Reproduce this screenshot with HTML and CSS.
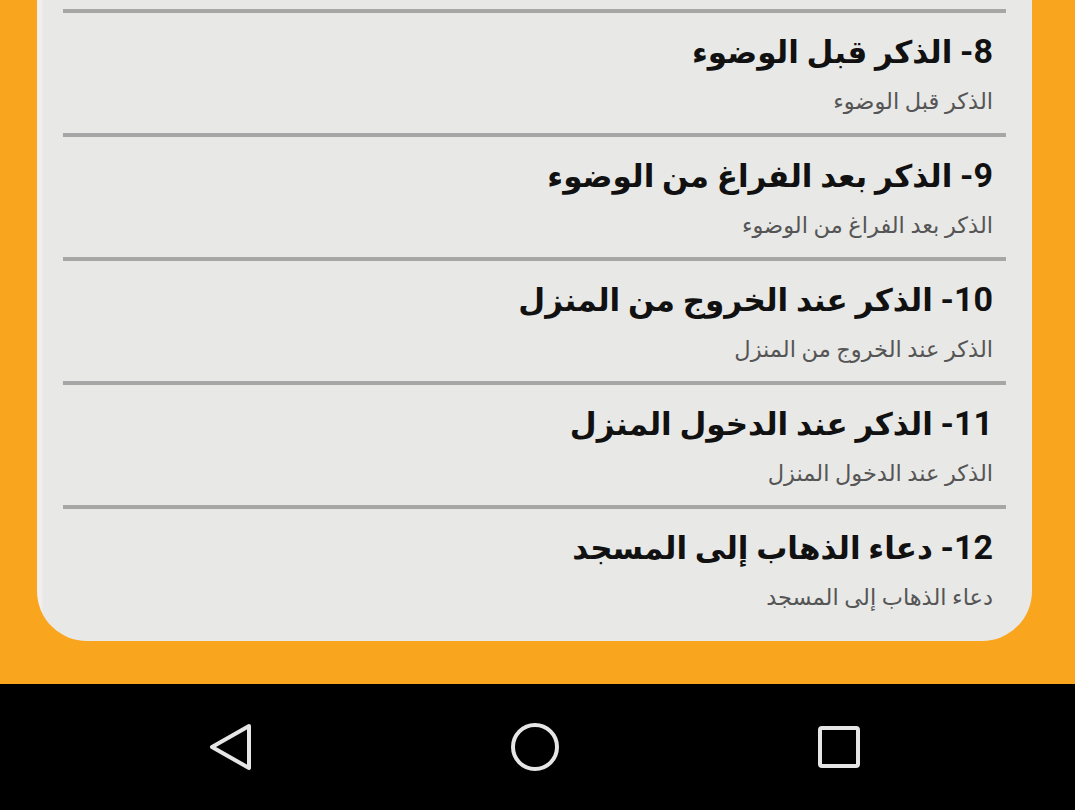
FILE: index.html
```html
<!DOCTYPE html>
<html lang="ar">
<head>
<meta charset="utf-8">
<title>أذكار</title>
<link rel="stylesheet" href="styles.css">
</head>
<body>
<div class="screen">
  <main class="content">
    <section class="card" dir="rtl">
      <div class="item">
        <div class="title"><span class="num">8-</span> الذكر قبل الوضوء</div>
        <div class="subtitle">الذكر قبل الوضوء</div>
      </div>
      <div class="item">
        <div class="title"><span class="num">9-</span> الذكر بعد الفراغ من الوضوء</div>
        <div class="subtitle">الذكر بعد الفراغ من الوضوء</div>
      </div>
      <div class="item">
        <div class="title"><span class="num">10-</span> الذكر عند الخروج من المنزل</div>
        <div class="subtitle">الذكر عند الخروج من المنزل</div>
      </div>
      <div class="item">
        <div class="title"><span class="num">11-</span> الذكر عند الدخول المنزل</div>
        <div class="subtitle">الذكر عند الدخول المنزل</div>
      </div>
      <div class="item">
        <div class="title"><span class="num">12-</span> دعاء الذهاب إلى المسجد</div>
        <div class="subtitle">دعاء الذهاب إلى المسجد</div>
      </div>
    </section>
  </main>
  <nav class="navbar">
    <div class="nav-btn">
      <svg width="48" height="48" viewBox="0 0 48 48"><path d="M42 3 L5 24 L42 45 Z" fill="none" stroke="#e6e6e6" stroke-width="4" stroke-linejoin="round"/></svg>
    </div>
    <div class="nav-btn">
      <svg width="48" height="48" viewBox="0 0 48 48"><circle cx="24" cy="24" r="22" fill="none" stroke="#e6e6e6" stroke-width="4"/></svg>
    </div>
    <div class="nav-btn">
      <svg width="48" height="48" viewBox="0 0 48 48"><rect x="5" y="5" width="38" height="38" rx="2" fill="none" stroke="#e6e6e6" stroke-width="4"/></svg>
    </div>
  </nav>
</div>
</body>
</html>
```

FILE: styles.css
```css
html, body {
  margin: 0;
  padding: 0;
}
body {
  width: 1075px;
  height: 810px;
  overflow: hidden;
  background: #f9a51e;
  font-family: "Roboto", "DejaVu Sans", sans-serif;
}
.screen {
  display: flex;
  flex-direction: column;
  height: 810px;
}
.content {
  height: 684px;
  background: #f9a51e;
  box-sizing: border-box;
  padding: 0 43px 43px 37px;
}
.card {
  background: linear-gradient(to right, #f0eeee 0, #f0eeee 5px, #e8e8e6 6px);
  border-radius: 0 0 50px 50px;
  padding: 9px 0 13px 0;
  box-sizing: border-box;
  height: 641px;
}
.item {
  margin: 0 26px 0 26px;
  border-top: 4px solid #a6a6a6;
  padding: 16px 13px 20px 13px;
  height: 124px;
  box-sizing: border-box;
}
.title {
  font-size: 31px;
  font-weight: bold;
  line-height: 44px;
  color: #111;
  white-space: nowrap;
}
.num {
  font-size: 34px;
}
.subtitle {
  margin-top: 11px;
  font-size: 22.5px;
  line-height: 30px;
  color: #555;
  white-space: nowrap;
}
.navbar {
  height: 126px;
  background: #000;
  display: flex;
  align-items: center;
  justify-content: center;
  gap: 256px;
  padding-right: 5px;
}
.nav-btn {
  width: 48px;
  height: 48px;
  display: flex;
}
```
